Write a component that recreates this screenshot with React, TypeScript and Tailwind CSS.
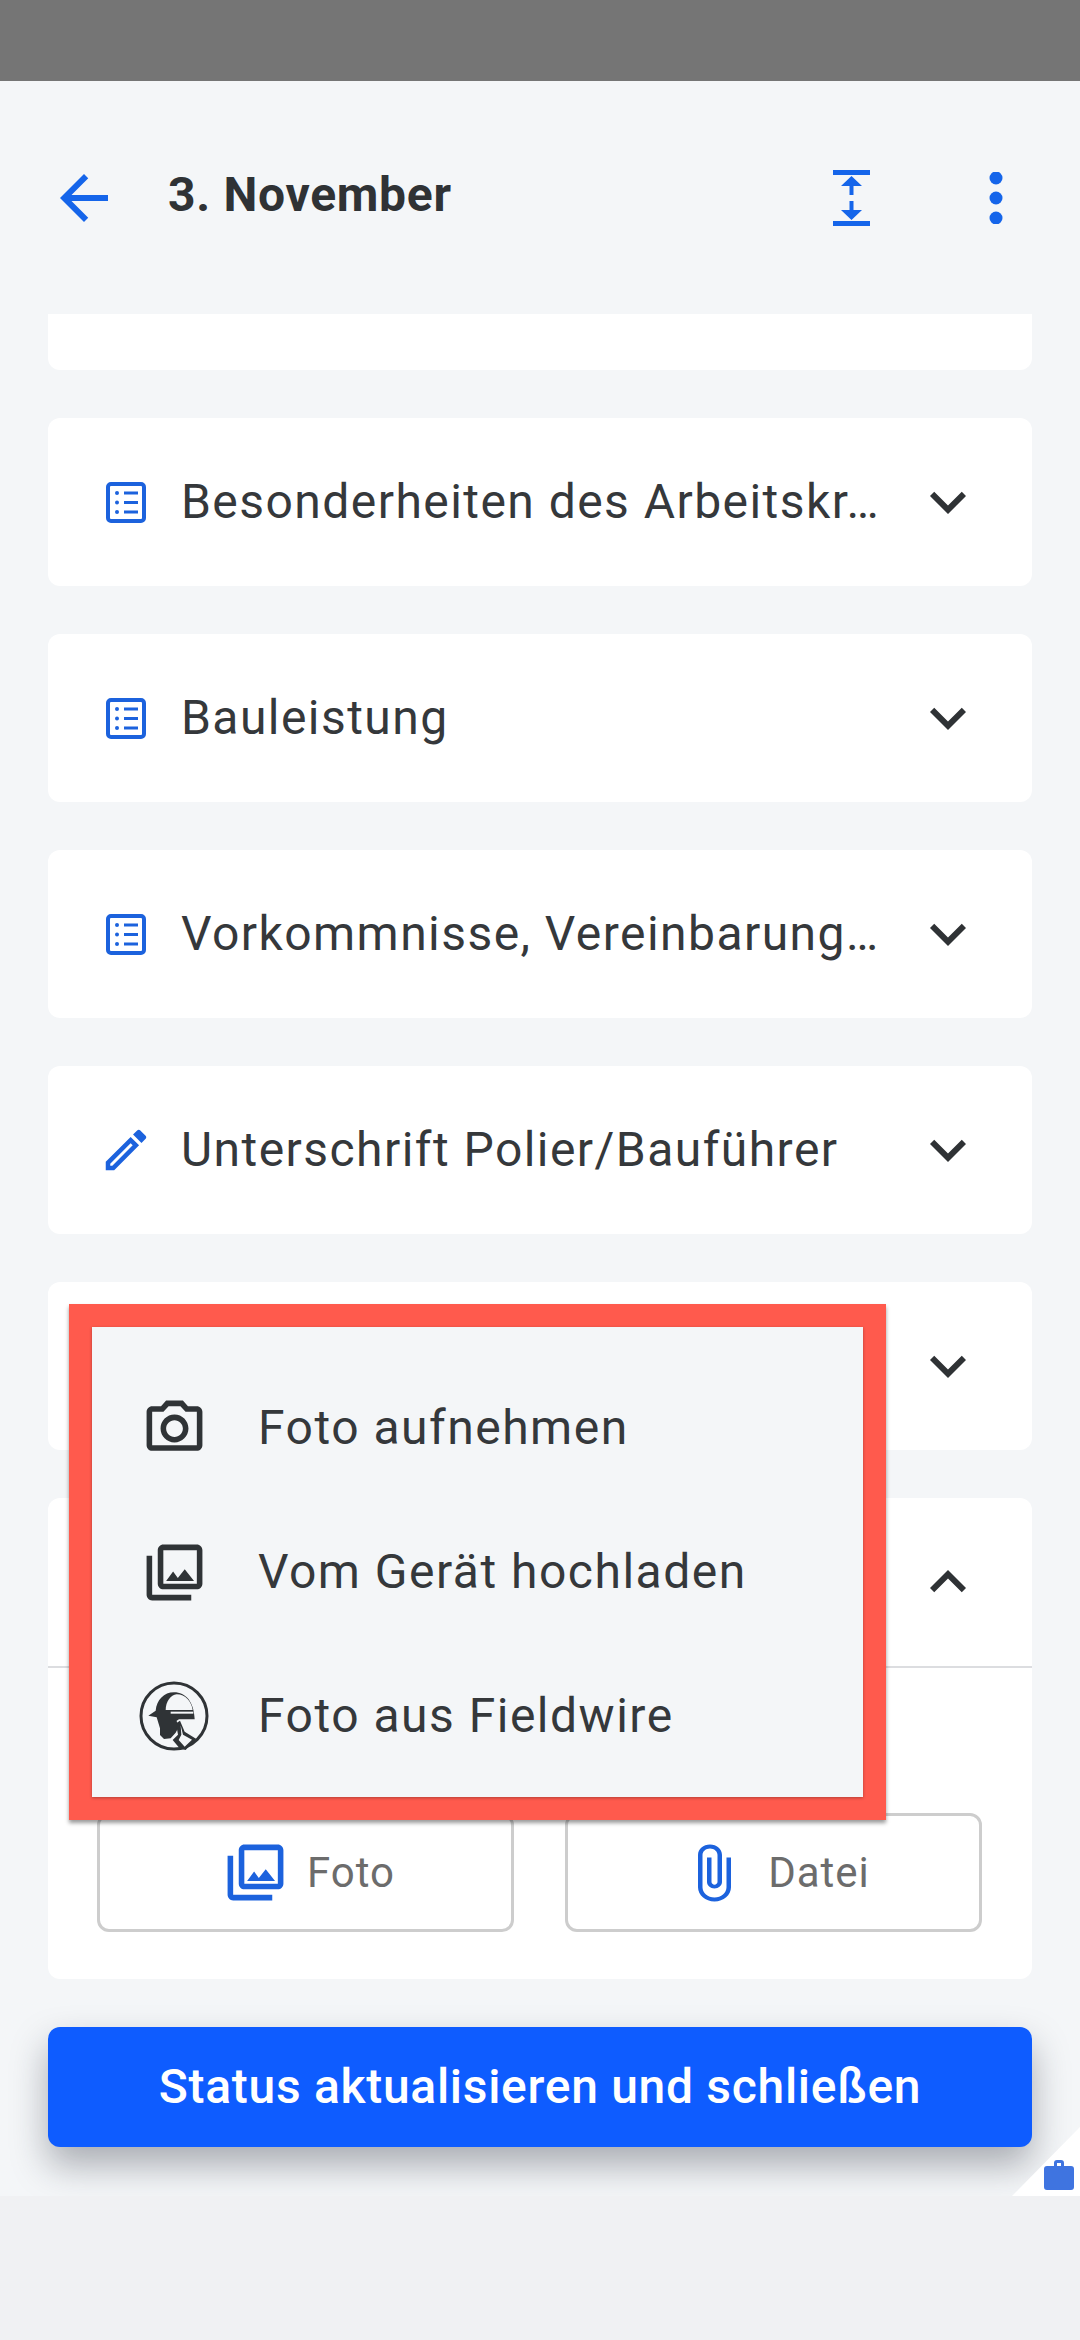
const PEN = "M3 17.25V21h3.75L17.81 9.94l-3.75-3.75L3 17.25zM5.92 19H5v-.92l9.06-9.06.92.92L5.92 19zM20.71 5.63l-2.34-2.34c-.2-.2-.45-.29-.71-.29s-.51.1-.7.29l-1.83 1.83 3.75 3.75 1.83-1.83c.39-.39.39-1.02 0-1.41z";
const DOWN = "M16.59 8.59L12 13.17 7.41 8.59 6 10l6 6 6-6z";
const UP = "M12 8l-6 6 1.41 1.41L12 10.83l4.59 4.58L18 14z";
const LIB = "M20 4v12H8V4h12m0-2H8c-1.1 0-2 .9-2 2v12c0 1.1.9 2 2 2h12c1.1 0 2-.9 2-2V4c0-1.1-.9-2-2-2zm-8.5 9.67l1.69 2.26 2.48-3.1L19 15H9zM2 6v14c0 1.1.9 2 2 2h14v-2H4V6H2z";
const CAM = "M14.12 4l1.83 2H20v12H4V6h4.05l1.83-2h4.24M15 2H9L7.17 4H4c-1.1 0-2 .9-2 2v12c0 1.1.9 2 2 2h16c1.1 0 2-.9 2-2V6c0-1.1-.9-2-2-2h-3.17L15 2zm-3 7c1.65 0 3 1.35 3 3s-1.35 3-3 3-3-1.35-3-3 1.35-3 3-3m0-2c-2.76 0-5 2.24-5 5s2.24 5 5 5 5-2.24 5-5-2.24-5-5-5z";
const CLIP = "M16.5 6v11.5c0 2.21-1.79 4-4 4s-4-1.79-4-4V5c0-1.38 1.12-2.5 2.5-2.5s2.5 1.12 2.5 2.5v10.5c0 .55-.45 1-1 1s-1-.45-1-1V6H10v9.5c0 1.38 1.12 2.5 2.5 2.5s2.5-1.12 2.5-2.5V5c0-2.21-1.79-4-4-4S7 2.79 7 5v12.5c0 3.04 2.46 5.5 5.5 5.5s5.5-2.46 5.5-5.5V6h-1.5z";

function Ico({ d, size, className }: { d: string; size: number; className: string }) {
  return (
    <svg width={size} height={size} viewBox="0 0 24 24" className={className} fill="currentColor">
      <path d={d} />
    </svg>
  );
}

function ListIcon() {
  return (
    <svg width="54" height="54" viewBox="0 0 54 54" className="text-[#1c62dd]">
      <rect x="9" y="9" width="36" height="37" rx="3" fill="none" stroke="currentColor" strokeWidth="4" />
      <g fill="currentColor">
        <circle cx="18" cy="18" r="2" />
        <circle cx="18" cy="27.5" r="2" />
        <circle cx="18" cy="37" r="2" />
        <rect x="25" y="16.5" width="14" height="3" />
        <rect x="25" y="26" width="14" height="3" />
        <rect x="25" y="35.5" width="14" height="3" />
      </g>
    </svg>
  );
}

function Row({ icon, label, chevron = DOWN }: { icon?: React.ReactNode; label?: string; chevron?: string }) {
  return (
    <div className="flex h-[168px] items-center pl-[51px] pr-[48px]">
      <div className="w-[54px] shrink-0">{icon}</div>
      <div className="ml-[28px] min-w-0 flex-1 whitespace-nowrap text-[48px] leading-[56px] tracking-[1.45px] text-[#35383b]">{label}</div>
      <Ico d={chevron} size={72} className="ml-[17px] shrink-0 text-[#2f3235]" />
    </div>
  );
}

function Card({ icon, label }: { icon?: React.ReactNode; label?: string }) {
  return (
    <div className="rounded-[12px] bg-white">
      <Row icon={icon} label={label} />
    </div>
  );
}

function MenuItem({ icon, label }: { icon: React.ReactNode; label: string }) {
  return (
    <div className="flex h-[144px] items-center">
      <div className="flex w-[164px] shrink-0 items-center justify-center">{icon}</div>
      <span className="ml-[2px] text-[48px] leading-[56px] tracking-[1.5px] text-[#35383b]">{label}</span>
    </div>
  );
}

function Fieldwire() {
  return (
    <svg width="70" height="70" viewBox="55 63 210 210">
      <circle cx="160" cy="168" r="99" fill="none" stroke="#2f3336" strokeWidth="9" />
      <path fill="#2f3336" d="M83 167L105 152C108 120 130 97 160 97C195 97 220 125 222 178L175 178L168 182L172 205L165 218L150 235L130 237L118 225L118 205L108 172Z" />
      <path fill="#f4f6f8" d="M135 150C135 125 150 105 168 103C195 103 212 125 216 150Z" />
      <rect x="150" y="155" width="68" height="6" fill="#f4f6f8" />
      <path fill="#2f3336" d="M156 240L172 224L166 190L178 182L192 215L226 236L218 245L195 270L178 266Z" />
      <path fill="#f4f6f8" d="M180 196L187 224L214 239L192 260L174 240L182 224Z" />
    </svg>
  );
}

export default function App() {
  return (
    <div className="relative flex h-[2340px] w-[1080px] flex-col overflow-hidden bg-[#f0f1f3] [font-family:Roboto,'Noto_Sans',sans-serif]">
      <div className="h-[81px] shrink-0 bg-[#757575]" />
      <div className="relative h-[2115px] shrink-0 overflow-hidden bg-[#f4f6f8]">
        <header className="flex h-[233px] items-center pl-[48px] pr-[36px]">
          <Ico d="M20 11H7.83l5.59-5.59L12 4l-8 8 8 8 1.41-1.41L7.83 13H20v-2z" size={72} className="shrink-0 text-[#1565ea]" />
          <h1 className="ml-[48px] flex-1 -translate-y-[3px] text-[48px] font-bold leading-[56px] tracking-[0.7px] text-[#2f3235]">3. November</h1>
          <svg width="37" height="56" viewBox="0 0 37 56" className="mr-[118px] shrink-0 text-[#1565ea]" fill="currentColor">
            <rect x="0" y="0" width="37" height="5" />
            <path d="M18.5 6L8 16h8.5v9h4v-9H29z" />
            <path d="M18.5 50L8 40h8.5v-9h4v9H29z" />
            <rect x="0" y="51" width="37" height="5" />
          </svg>
          <svg width="16" height="52" viewBox="0 0 16 52" className="mr-[40px] shrink-0 text-[#1565ea]" fill="currentColor">
            <ellipse cx="8" cy="6" rx="6.5" ry="6.5" />
            <ellipse cx="8" cy="26" rx="6.5" ry="6.5" />
            <ellipse cx="8" cy="46" rx="6.5" ry="6.5" />
          </svg>
        </header>

        <main className="flex flex-col gap-[48px] px-[48px]">
          <div className="h-[56px] rounded-b-[12px] bg-white" />
          <Card icon={<ListIcon />} label="Besonderheiten des Arbeitskr…" />
          <Card icon={<ListIcon />} label="Bauleistung" />
          <Card icon={<ListIcon />} label="Vorkommnisse, Vereinbarung…" />
          <Card icon={<Ico d={PEN} size={54} className="text-[#1c62dd]" />} label="Unterschrift Polier/Bauführer" />
          <Card />
          <section className="h-[481px] rounded-[12px] bg-white">
            <div className="border-b-2 border-[#dcdde0]">
              <Row chevron={UP} />
            </div>
            <div className="flex gap-[51px] px-[49px] pt-[145px]">
              <div className="flex h-[119px] w-[417px] items-center justify-center gap-[18px] rounded-[12px] border-[3px] border-[#cdcdcd] pl-[6px]">
                <Ico d={LIB} size={67} className="text-[#1c62dd]" />
                <span className="text-[42px] leading-[50px] tracking-[1px] text-[#6c6c6c]">Foto</span>
              </div>
              <div className="flex h-[119px] w-[417px] items-center justify-center gap-[19px] rounded-[12px] border-[3px] border-[#cdcdcd]">
                <svg width="72" height="62" viewBox="0 0 24 24" preserveAspectRatio="none" className="text-[#1c62dd]" fill="currentColor">
                  <path d={CLIP} />
                </svg>
                <span className="text-[42px] leading-[50px] tracking-[1px] text-[#6c6c6c]">Datei</span>
              </div>
            </div>
          </section>
          <button className="h-[120px] rounded-[12px] bg-[#0e5cff] text-[48px] font-medium tracking-[0.7px] text-white shadow-[0_18px_36px_rgba(30,35,50,0.35)]">
            Status aktualisieren und schließen
          </button>
        </main>

        <div className="absolute bottom-0 right-0 h-[69px] w-[68px] bg-white [clip-path:polygon(100%_0,100%_100%,0_100%)]" />
        <svg width="32" height="32" viewBox="0 0 32 32" className="absolute bottom-[5px] right-[5px]" fill="#3f74e0">
          <path d="M11 7V4a3 3 0 0 1 3-3h4a3 3 0 0 1 3 3v3h7a3 3 0 0 1 3 3v18a3 3 0 0 1-3 3H4a3 3 0 0 1-3-3V10a3 3 0 0 1 3-3zm3 0h4V4h-4z" fillRule="evenodd" />
        </svg>
      </div>

      <div className="absolute left-[69px] top-[1304px] h-[516px] w-[817px] border-[23px] border-[#ff5a4d] bg-[#f4f6f8] shadow-[0_3px_4px_rgba(0,0,0,0.4)]">
        <div className="flex h-full flex-col justify-center pt-[20px] shadow-[0_1px_3px_rgba(0,0,0,0.3)]">
          <MenuItem icon={<Ico d={CAM} size={67} className="text-[#2f3336]" />} label="Foto aufnehmen" />
          <MenuItem icon={<Ico d={LIB} size={67} className="text-[#2f3336]" />} label="Vom Gerät hochladen" />
          <MenuItem icon={<Fieldwire />} label="Foto aus Fieldwire" />
        </div>
      </div>
    </div>
  );
}
